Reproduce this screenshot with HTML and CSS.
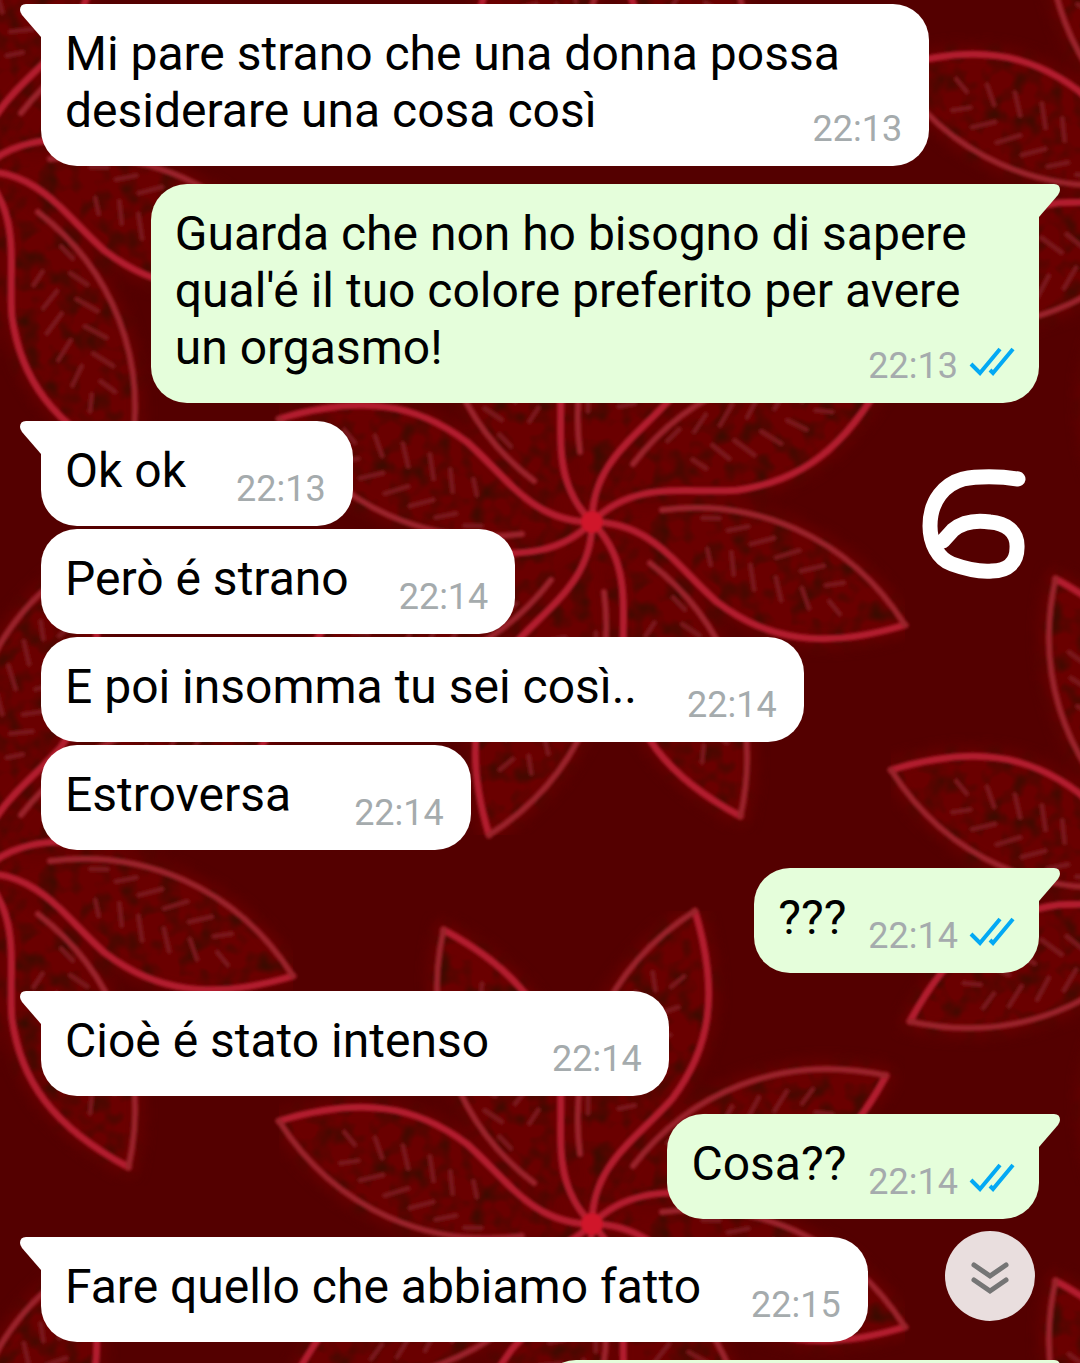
FILE: index.html
```html
<!DOCTYPE html>
<html lang="it">
<head>
  <meta charset="UTF-8" />
  <meta name="viewport" content="width=device-width, initial-scale=1.0" />
  <title>Chat</title>
  <link rel="stylesheet" href="styles.css">
</head>
<body>
  <!-- Wallpaper: one leaf, turned eight times into a flower, then tiled -->
  <svg class="wallpaper" aria-hidden="true">
    <defs>
      <filter id="soft" x="-10%" y="-10%" width="120%" height="120%">
        <feGaussianBlur stdDeviation="1.6" />
      </filter>
      <filter id="glow" x="-10%" y="-10%" width="120%" height="120%">
        <feGaussianBlur stdDeviation="8" />
      </filter>
      <filter id="grain" x="0" y="0" width="100%" height="100%" color-interpolation-filters="sRGB">
        <feTurbulence type="fractalNoise" baseFrequency="0.05" numOctaves="2" seed="4" />
        <feColorMatrix values="0 0 0 0 0.24  0 0 0 0 0.04  0 0 0 0 0  2.4 0 0 0 -1.05" />
        <feComposite in2="SourceGraphic" operator="in" result="spots" />
        <feMerge>
          <feMergeNode in="SourceGraphic" />
          <feMergeNode in="spots" />
        </feMerge>
      </filter>
      <path id="shape" d="M0,0 C60,0 85,45 125,80 C175,118 230,128 313,103 C255,12 160,-24 70,-12 C40,-8 20,-4 0,0 Z" />
      <g id="outline">
        <path class="edge" d="M0,0 C60,0 85,45 125,80 C175,118 230,128 313,103" />
        <path class="edge edge-thin" d="M313,103 C255,12 160,-24 70,-12" />
        <g class="veins" transform="rotate(18)">
          <path d="M104,-38l16,-5 M132,-34l18,-10 M158,-28l20,-13 M186,-23l20,-14 M214,-18l20,-12 M242,-12l16,-8" />
          <path d="M118,-10l8,14 M142,-14l9,20 M164,-8l11,22 M192,-4l12,20 M220,-2l13,17 M250,2l14,9" />
        </g>
      </g>
      <g id="flower">
        <g class="glow">
          <use href="#shape" />
          <use href="#shape" transform="rotate(45)" />
          <use href="#shape" transform="rotate(90)" />
          <use href="#shape" transform="rotate(135)" />
          <use href="#shape" transform="rotate(180)" />
          <use href="#shape" transform="rotate(225)" />
          <use href="#shape" transform="rotate(270)" />
          <use href="#shape" transform="rotate(315)" />
        </g>
        <g class="lines">
          <use href="#outline" />
          <use href="#outline" transform="rotate(45)" />
          <use href="#outline" transform="rotate(90)" />
          <use href="#outline" transform="rotate(135)" />
          <use href="#outline" transform="rotate(180)" />
          <use href="#outline" transform="rotate(225)" />
          <use href="#outline" transform="rotate(270)" />
          <use href="#outline" transform="rotate(315)" />
          <circle class="heart" r="11" />
        </g>
      </g>
      <pattern id="flowers" width="1224" height="702" patternUnits="userSpaceOnUse">
        <use href="#flower" x="592" y="522" />
        <use href="#flower" x="592" y="-180" />
        <use href="#flower" x="-20" y="171" />
        <use href="#flower" x="1204" y="171" />
        <use href="#flower" x="-20" y="873" />
        <use href="#flower" x="1204" y="873" />
      </pattern>
      <symbol id="ticks" viewBox="0 0 46 32">
        <path d="M2 19L11 28L31 4M21 25L24 28L44 4" />
      </symbol>
    </defs>
    <rect width="100%" height="100%" fill="url(#flowers)" />
  </svg>

  <main class="chat">
    <div class="bubble in tail">
      Mi pare strano che una donna possa desiderare una cosa così
      <div class="meta"><time>22:13</time></div>
    </div>
    <div class="bubble out tail">
      Guarda che non ho bisogno di sapere qual'é il tuo colore preferito per avere un orgasmo!
      <div class="meta"><time>22:13</time><svg class="ticks"><use href="#ticks" /></svg></div>
    </div>
    <div class="bubble in tail">
      Ok ok
      <div class="meta"><time>22:13</time></div>
    </div>
    <div class="bubble in">
      Però é strano
      <div class="meta"><time>22:14</time></div>
    </div>
    <div class="bubble in">
      E poi insomma tu sei così..
      <div class="meta"><time>22:14</time></div>
    </div>
    <div class="bubble in roomy">
      Estroversa
      <div class="meta"><time>22:14</time></div>
    </div>
    <div class="bubble out tail">
      ???
      <div class="meta"><time>22:14</time><svg class="ticks"><use href="#ticks" /></svg></div>
    </div>
    <div class="bubble in tail roomy">
      Cioè é stato intenso
      <div class="meta"><time>22:14</time></div>
    </div>
    <div class="bubble out tail">
      Cosa??
      <div class="meta"><time>22:14</time><svg class="ticks"><use href="#ticks" /></svg></div>
    </div>
    <div class="bubble in tail">
      Fare quello che abbiamo fatto
      <div class="meta"><time>22:15</time></div>
    </div>
    <div class="bubble out tail next"></div>
  </main>

  <!-- Hand-drawn mark -->
  <svg class="doodle" viewBox="0 0 110 112" role="img" aria-label="6">
    <path d="M98 11C80 8 57 8 43 11C25 16 10 32 10 58C10 75 18 91 32 96C43 100 60 104 72 103C88 103 97 94 97 80C98 63 85 55 70 54C56 52 44 53 33 62L23 73" />
  </svg>

  <button class="scroll-down" type="button" aria-label="Vai in fondo">
    <svg viewBox="0 0 90 90"><path d="M29 34L45 45L61 34M29 49L45 60L61 49" /></svg>
  </button>
</body>
</html>
```

FILE: styles.css
```css
* {
  box-sizing: border-box;
}
body {
  margin: 0;
  height: 100vh;
  overflow: hidden;
  position: relative;
  background-color: #540000;
  color: #000;
  font-family: Roboto, "Noto Sans", sans-serif;
}

/* Wallpaper */
.wallpaper {
  position: absolute;
  width: 100%;
  height: 100%;
  z-index: -1;
}
.glow {
  fill: #6a0000;
  stroke: #6a0000;
  stroke-width: 14;
  filter: url(#glow) url(#grain);
}
.lines {
  fill: none;
  stroke-linecap: round;
  stroke-linejoin: round;
  filter: url(#soft);
}
.edge {
  stroke: #b21c2e;
  stroke-width: 7;
}
.edge-thin {
  stroke: #9a222c;
  stroke-width: 6;
}
.veins {
  stroke: #7a161a;
  stroke-width: 5;
}
.heart {
  fill: #d0142c;
}

/* Messages */
.chat {
  display: flex;
  flex-direction: column;
  align-items: flex-start;
  gap: 3px;
  height: 100%;
  overflow: hidden;
  padding: 4px 41px 0;
}
.bubble {
  display: flow-root;
  flex-shrink: 0;
  position: relative;
  max-width: 89%;
  padding: 21px 24px 16px;
  border-radius: 36px;
  font-size: 48px;
  line-height: 57px;
}
.in {
  padding-right: 27px;
  background-color: #fff;
}
.out {
  align-self: flex-end;
  background-color: #e5fedb;
}
.tail {
  margin-top: 15px;
}
.tail:first-child {
  margin-top: 0;
}
.in.tail {
  border-top-left-radius: 0;
}
.out.tail {
  border-top-right-radius: 0;
}
.tail::before {
  content: "";
  position: absolute;
  top: 0;
  left: -21px;
  width: 22px;
  height: 34px;
  background-color: inherit;
  clip-path: path("M22 0H6Q0 0 0 6Q0 8 2 11L21 33L22 34Z");
}
.out.tail::before {
  left: auto;
  right: -21px;
  transform: scaleX(-1);
}
.next {
  width: 50%;
  height: 105px;
}
/* the time hangs below the last line of the message */
.meta {
  display: flex;
  float: right;
  gap: 11px;
  margin: 26px 0 0 50px;
  color: #a5abad;
  font-size: 36px;
  line-height: 42px;
}
.out .meta {
  margin-left: 22px;
}
.roomy .meta {
  margin-left: 63px;
}
.ticks {
  width: 46px;
  height: 32px;
  fill: none;
  stroke: #03a9f4;
  stroke-width: 4;
}

/* Overlays */
.doodle {
  position: absolute;
  top: 468px;
  right: 50px;
  width: 110px;
  height: 112px;
  fill: none;
  stroke: #fff;
  stroke-width: 15;
  stroke-linecap: round;
  stroke-linejoin: round;
}
.scroll-down {
  position: absolute;
  right: 45px;
  bottom: 42px;
  width: 90px;
  height: 90px;
  padding: 0;
  border: none;
  border-radius: 50%;
  background-color: rgba(255, 255, 255, 0.87);
  cursor: pointer;
}
.scroll-down svg {
  display: block;
  fill: none;
  stroke: #757575;
  stroke-width: 5;
  stroke-linecap: round;
}
```
